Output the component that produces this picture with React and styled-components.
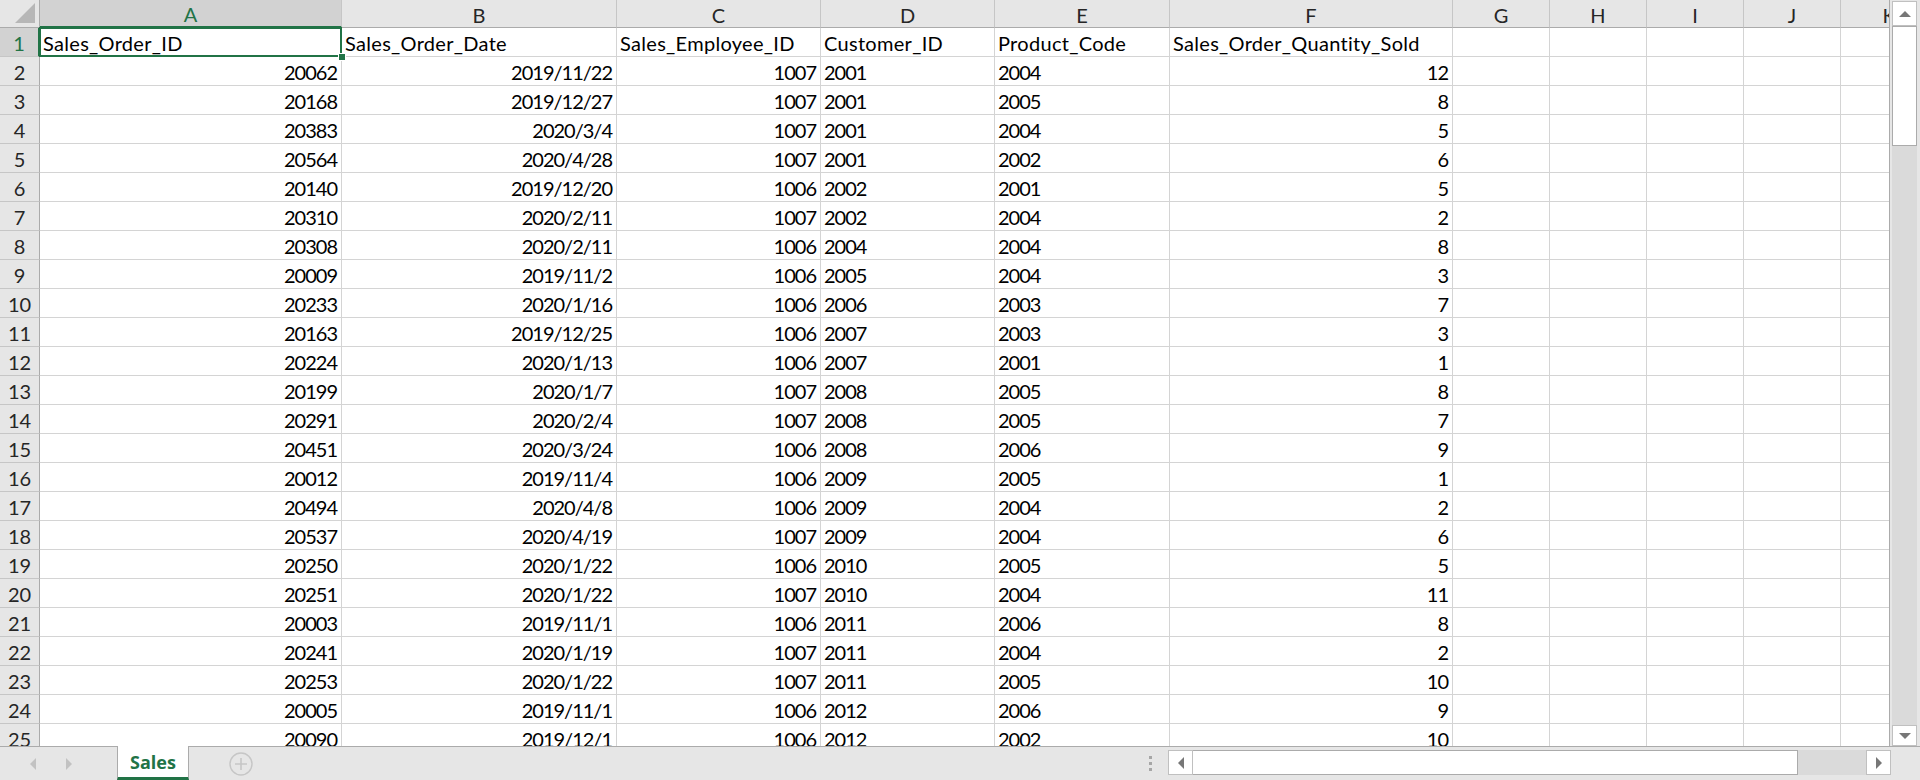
import styled, { createGlobalStyle } from 'styled-components';

const GlobalStyle = createGlobalStyle`
  html, body {
    margin: 0;
    padding: 0;
    background: #e6e6e6;
    overflow: hidden;
  }
`;

const COLS = [
  { key: 'A', width: 302, align: 'right' },
  { key: 'B', width: 275, align: 'right' },
  { key: 'C', width: 204, align: 'right' },
  { key: 'D', width: 174, align: 'left' },
  { key: 'E', width: 175, align: 'left' },
  { key: 'F', width: 283, align: 'right' },
  { key: 'G', width: 97 },
  { key: 'H', width: 97 },
  { key: 'I', width: 97 },
  { key: 'J', width: 97 },
  { key: 'K', width: 97 },
];

const HEADINGS = ['Sales_Order_ID', 'Sales_Order_Date', 'Sales_Employee_ID', 'Customer_ID', 'Product_Code', 'Sales_Order_Quantity_Sold'];

const ROWS = [
  ['20062', '2019/11/22', '1007', '2001', '2004', '12'],
  ['20168', '2019/12/27', '1007', '2001', '2005', '8'],
  ['20383', '2020/3/4', '1007', '2001', '2004', '5'],
  ['20564', '2020/4/28', '1007', '2001', '2002', '6'],
  ['20140', '2019/12/20', '1006', '2002', '2001', '5'],
  ['20310', '2020/2/11', '1007', '2002', '2004', '2'],
  ['20308', '2020/2/11', '1006', '2004', '2004', '8'],
  ['20009', '2019/11/2', '1006', '2005', '2004', '3'],
  ['20233', '2020/1/16', '1006', '2006', '2003', '7'],
  ['20163', '2019/12/25', '1006', '2007', '2003', '3'],
  ['20224', '2020/1/13', '1006', '2007', '2001', '1'],
  ['20199', '2020/1/7', '1007', '2008', '2005', '8'],
  ['20291', '2020/2/4', '1007', '2008', '2005', '7'],
  ['20451', '2020/3/24', '1006', '2008', '2006', '9'],
  ['20012', '2019/11/4', '1006', '2009', '2005', '1'],
  ['20494', '2020/4/8', '1006', '2009', '2004', '2'],
  ['20537', '2020/4/19', '1007', '2009', '2004', '6'],
  ['20250', '2020/1/22', '1006', '2010', '2005', '5'],
  ['20251', '2020/1/22', '1007', '2010', '2004', '11'],
  ['20003', '2019/11/1', '1006', '2011', '2006', '8'],
  ['20241', '2020/1/19', '1007', '2011', '2004', '2'],
  ['20253', '2020/1/22', '1007', '2011', '2005', '10'],
  ['20005', '2019/11/1', '1006', '2012', '2006', '9'],
  ['20090', '2019/12/1', '1006', '2012', '2002', '10'],
];

const GREEN = '#217346';

const Window = styled.div`
  width: 1920px;
  height: 780px;
  display: flex;
  flex-direction: column;
  background: #e6e6e6;
  font-family: Lato, "Liberation Sans", sans-serif;
`;

const Main = styled.div`
  display: flex;
  height: 746px;
`;

const Sheet = styled.div`
  width: 1889px;
  height: 746px;
  overflow: hidden;
  background: #fff;
  border-right: 1px solid #ababab;
  display: grid;
  grid-template-columns: 40px ${COLS.map((c) => `${c.width}px`).join(' ')};
  grid-template-rows: 28px;
  grid-auto-rows: 29px;
`;

const Corner = styled.div`
  background: #e6e6e6;
  border-right: 1px solid #ababab;
  border-bottom: 1px solid #ababab;
  position: relative;
  &::after {
    content: "";
    position: absolute;
    right: 4px;
    bottom: 4px;
    border-style: solid;
    border-width: 0 0 20px 20px;
    border-color: transparent transparent #b7b7b7 transparent;
  }
`;

const ColHead = styled.div`
  background: ${(p) => (p.$active ? '#d2d2d2' : '#e6e6e6')};
  color: ${(p) => (p.$active ? GREEN : '#262626')};
  border-right: 1px solid #c6c6c6;
  border-bottom: ${(p) => (p.$active ? `2px solid ${GREEN}` : '1px solid #ababab')};
  display: flex;
  align-items: center;
  justify-content: center;
  font-size: 20px;
  padding-top: 2px;
  box-sizing: border-box;
  overflow: hidden;
  white-space: nowrap;
`;

const RowHead = styled.div`
  background: ${(p) => (p.$active ? '#d2d2d2' : '#e6e6e6')};
  color: ${(p) => (p.$active ? GREEN : '#262626')};
  border-right: ${(p) => (p.$active ? `2px solid ${GREEN}` : '1px solid #ababab')};
  border-bottom: 1px solid #c6c6c6;
  display: flex;
  align-items: center;
  justify-content: center;
  font-size: 20px;
  padding-top: 2px;
  box-sizing: border-box;
`;

const Cell = styled.div`
  border-right: 1px solid #d4d4d4;
  border-bottom: 1px solid #d4d4d4;
  display: flex;
  align-items: center;
  justify-content: ${(p) => (p.$align === 'right' ? 'flex-end' : 'flex-start')};
  padding: 2px 4px 0 3px;
  font-size: 20px;
  letter-spacing: ${(p) => (p.$numeric ? '-1px' : '0.3px')};
  color: #000;
  white-space: nowrap;
  box-sizing: border-box;
  position: relative;
  overflow: visible;
`;

const SelectedCell = styled(Cell)`
  &::before {
    content: "";
    position: absolute;
    left: -1px;
    top: -1px;
    right: -1px;
    bottom: -1px;
    border: 2px solid ${GREEN};
    pointer-events: none;
    z-index: 2;
  }
  &::after {
    content: "";
    position: absolute;
    right: -5px;
    bottom: -5px;
    width: 6px;
    height: 6px;
    background: ${GREEN};
    border: 1px solid #fff;
    z-index: 3;
  }
`;

const VScroll = styled.div`
  width: 25px;
  margin: 0 3px 0 2px;
  display: flex;
  flex-direction: column;
  background: #dadada;
  border-top: 1px solid #e6e6e6;
`;

const ScrollButton = styled.div`
  background: #fff;
  border: 1px solid #c0c0c0;
  box-sizing: border-box;
  width: ${(p) => (p.$w ? `${p.$w}px` : '100%')};
  height: ${(p) => (p.$h ? `${p.$h}px` : '100%')};
  display: flex;
  align-items: center;
  justify-content: center;
  flex-shrink: 0;
`;

const VThumb = styled.div`
  height: 120px;
  background: #fff;
  border: 1px solid #ababab;
  box-sizing: border-box;
`;

const Track = styled.div`
  flex: 1;
`;

const BottomBar = styled.div`
  height: 34px;
  display: flex;
  align-items: stretch;
  border-top: 1px solid #ababab;
  box-sizing: border-box;
`;

const TabNav = styled.div`
  width: 117px;
  display: flex;
  align-items: center;
  padding-left: 28px;
  gap: 26px;
  box-sizing: border-box;
`;

const Tab = styled.div`
  margin-top: -1px;
  width: 72px;
  background: #fff;
  border-left: 1px solid #ababab;
  border-right: 1px solid #ababab;
  border-bottom: 3px solid ${GREEN};
  box-sizing: border-box;
  display: flex;
  align-items: center;
  justify-content: center;
  color: ${GREEN};
  font-family: "Open Sans", "Noto Sans", sans-serif;
  font-weight: 700;
  font-size: 18px;
  padding-top: 1px;
`;

const AddSheet = styled.div`
  width: 100px;
  display: flex;
  align-items: center;
  padding-left: 40px;
  box-sizing: border-box;
`;

const Spacer = styled.div`
  flex: 1;
`;

const Splitter = styled.div`
  width: 18px;
  margin-right: 9px;
  display: flex;
  flex-direction: column;
  justify-content: center;
  align-items: center;
  gap: 3px;
  span {
    width: 3px;
    height: 3px;
    background: #a6a6a6;
  }
`;

const HScroll = styled.div`
  width: 723px;
  margin: 3px 29px 5px 0;
  display: flex;
  background: #dadada;
`;

const HThumb = styled.div`
  width: 605px;
  background: #fff;
  border: 1px solid #ababab;
  border-left: none;
  box-sizing: border-box;
`;

function Arrow({ dir, color = '#777' }) {
  const pts = {
    up: '0,8 6,2 12,8',
    down: '0,2 6,8 12,2',
    left: '8,0 2,6 8,12',
    right: '2,0 8,6 2,12',
  }[dir];
  const vertical = dir === 'up' || dir === 'down';
  return (
    <svg width={vertical ? 12 : 10} height={vertical ? 10 : 12} viewBox={vertical ? '0 0 12 10' : '0 0 10 12'}>
      <polygon points={pts} fill={color} />
    </svg>
  );
}

function PlusCircle() {
  return (
    <svg width="24" height="24" viewBox="0 0 24 24">
      <circle cx="12" cy="12" r="11" fill="none" stroke="#c6c6c6" strokeWidth="1.4" />
      <path d="M12 6v12M6 12h12" stroke="#c6c6c6" strokeWidth="1.6" />
    </svg>
  );
}

function SheetGrid() {
  const cells = [];
  cells.push(<Corner key="corner" />);
  COLS.forEach((c, i) => {
    cells.push(
      <ColHead key={`h${c.key}`} $active={i === 0}>
        {c.key}
      </ColHead>
    );
  });

  const allRows = [HEADINGS, ...ROWS];
  allRows.forEach((row, r) => {
    cells.push(
      <RowHead key={`r${r}`} $active={r === 0}>
        {r + 1}
      </RowHead>
    );
    COLS.forEach((c, i) => {
      const value = row[i] ?? '';
      const align = r === 0 ? 'left' : c.align;
      const Comp = r === 0 && i === 0 ? SelectedCell : Cell;
      cells.push(
        <Comp key={`c${r}-${i}`} $align={align} $numeric={r > 0}>
          {value}
        </Comp>
      );
    });
  });

  return <Sheet>{cells}</Sheet>;
}

export default function App() {
  return (
    <Window>
      <GlobalStyle />
      <Main>
        <SheetGrid />
        <VScroll>
          <ScrollButton $h={25}>
            <Arrow dir="up" />
          </ScrollButton>
          <VThumb />
          <Track />
          <ScrollButton $h={21}>
            <Arrow dir="down" />
          </ScrollButton>
        </VScroll>
      </Main>
      <BottomBar>
        <TabNav>
          <Arrow dir="left" color="#c2c2c2" />
          <Arrow dir="right" color="#c2c2c2" />
        </TabNav>
        <Tab>Sales</Tab>
        <AddSheet>
          <PlusCircle />
        </AddSheet>
        <Spacer />
        <Splitter>
          <span />
          <span />
          <span />
        </Splitter>
        <HScroll>
          <ScrollButton $w={25}>
            <Arrow dir="left" />
          </ScrollButton>
          <HThumb />
          <Track />
          <ScrollButton $w={25}>
            <Arrow dir="right" />
          </ScrollButton>
        </HScroll>
      </BottomBar>
    </Window>
  );
}
